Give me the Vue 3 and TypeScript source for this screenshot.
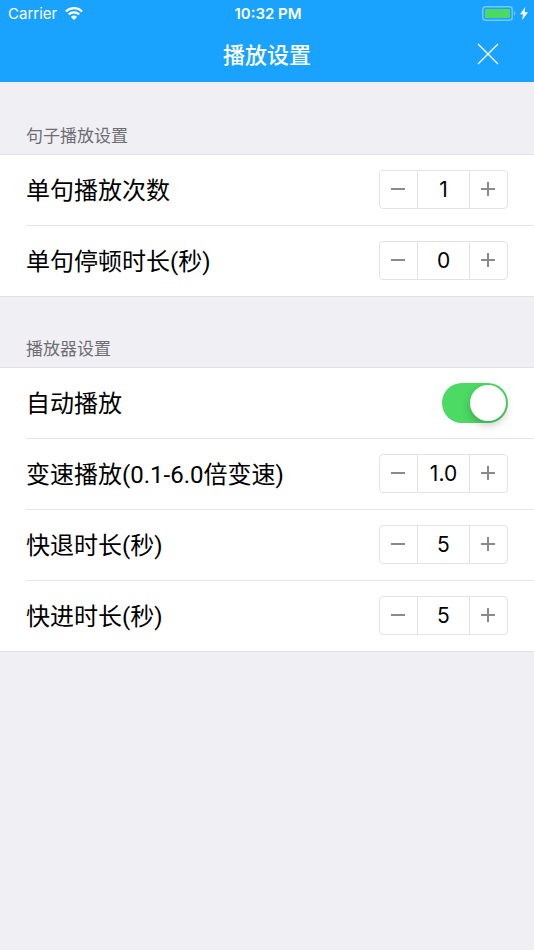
<script setup lang="ts">
import { reactive } from 'vue'

interface StepperRow {
  kind: 'stepper'
  id: string
  label: string
  value: number
  step: number
  min: number
  max: number
  digits: number
}

interface SwitchRow {
  kind: 'switch'
  id: string
  label: string
  on: boolean
}

interface Group {
  title: string
  rows: (StepperRow | SwitchRow)[]
}

const stepper = (id: string, label: string, value: number, step = 1, min = 0, max = 99, digits = 0): StepperRow => ({
  kind: 'stepper', id, label, value, step, min, max, digits,
})

const groups = reactive<Group[]>([
  {
    title: '句子播放设置',
    rows: [
      stepper('repeat', '单句播放次数', 1, 1, 1),
      stepper('pause', '单句停顿时长(秒)', 0),
    ],
  },
  {
    title: '播放器设置',
    rows: [
      { kind: 'switch', id: 'autoplay', label: '自动播放', on: true },
      stepper('speed', '变速播放(0.1-6.0倍变速)', 1, 0.1, 0.1, 6, 1),
      stepper('rewind', '快退时长(秒)', 5),
      stepper('forward', '快进时长(秒)', 5),
    ],
  },
])

function setValue(row: StepperRow, next: number) {
  if (Number.isNaN(next)) return
  row.value = Math.min(row.max, Math.max(row.min, Number(next.toFixed(row.digits))))
}

function onInput(row: StepperRow, event: Event) {
  setValue(row, parseFloat((event.target as HTMLInputElement).value))
}
</script>

<template>
  <div class="screen">
    <header class="top">
      <div class="status">
        <div class="carrier">
          <span>Carrier</span>
          <svg class="wifi" viewBox="0 0 18 13" aria-hidden="true">
            <path d="M.9 4.5a11.5 11.5 0 0 1 16.2 0" />
            <path d="M3.8 7.5a7.4 7.4 0 0 1 10.4 0" />
            <path class="solid" d="M9 13 5.9 9.9a4.4 4.4 0 0 1 6.2 0Z" />
          </svg>
        </div>
        <time class="clock">10:32 PM</time>
        <div class="power">
          <svg class="battery" viewBox="0 0 34 15" aria-hidden="true">
            <rect class="shell" x="0.75" y="0.75" width="29.5" height="13.5" rx="3" />
            <rect class="charge" x="3" y="3" width="25" height="9" rx="1" />
            <path class="cap" d="M32 5.2c1.8.5 1.8 4.1 0 4.6Z" />
          </svg>
          <svg class="bolt" viewBox="0 0 8 13" aria-hidden="true">
            <path d="M5.2 0 0 7.2h3L2.2 13 8 5.3H4.7Z" />
          </svg>
        </div>
      </div>
      <div class="nav">
        <h1>播放设置</h1>
        <button class="close" type="button" aria-label="关闭">
          <svg viewBox="0 0 22 22" aria-hidden="true"><path d="M1 1l20 20M21 1L1 21" /></svg>
        </button>
      </div>
    </header>

    <main>
      <section v-for="group in groups" :key="group.title">
        <h2>{{ group.title }}</h2>
        <div class="rows">
          <div v-for="row in group.rows" :key="row.id" class="row">
            <label :for="row.id">{{ row.label }}</label>
            <div v-if="row.kind === 'stepper'" class="stepper">
              <button type="button" :aria-label="row.label + ' −'" @click="setValue(row, row.value - row.step)">
                <svg viewBox="0 0 15 15" aria-hidden="true"><path d="M0 7h14" /></svg>
              </button>
              <input
                :id="row.id"
                type="text"
                inputmode="decimal"
                :value="row.value.toFixed(row.digits)"
                @change="onInput(row, $event)"
              />
              <button type="button" :aria-label="row.label + ' +'" @click="setValue(row, row.value + row.step)">
                <svg viewBox="0 0 15 15" aria-hidden="true"><path d="M0 7h14M7 0v14" /></svg>
              </button>
            </div>
            <input v-else :id="row.id" v-model="row.on" class="switch" type="checkbox" role="switch" />
          </div>
        </div>
      </section>
    </main>
  </div>
</template>

<style>
body {
  background: #efeff4;
}
</style>

<style scoped>
.screen {
  min-height: 100vh;
  background: #efeff4;
  color: #000;
  font-family: Roboto, "Noto Sans CJK SC", sans-serif;
}

button,
input {
  margin: 0;
  padding: 0;
  border: 0;
  background: none;
  color: inherit;
  font: inherit;
}

button {
  display: flex;
  align-items: center;
  justify-content: center;
  cursor: pointer;
}

svg {
  display: block;
  fill: none;
}

.top {
  background: #19a3ff;
  color: #fff;
}

.status {
  display: grid;
  grid-template-columns: 1fr auto 1fr;
  align-items: center;
  height: 26px;
  padding: 0 6px 0 8px;
  font-family: Inter, sans-serif;
  font-size: 15px;
}

.carrier,
.power {
  display: flex;
  align-items: center;
}

.carrier {
  gap: 8px;
}

.power {
  justify-content: flex-end;
  gap: 4px;
}

.wifi {
  width: 18px;
  height: 13px;
  stroke: #fff;
  stroke-width: 2.4;
}

.wifi .solid {
  fill: #fff;
  stroke: none;
}

.clock {
  font-weight: 600;
}

.battery {
  width: 34px;
  height: 15px;
}

.shell {
  stroke: #75c8ff;
  stroke-width: 1.5;
}

.charge {
  fill: #4cd964;
}

.cap {
  fill: #75c8ff;
}

.bolt {
  width: 8px;
  height: 13px;
  fill: #fff;
}

.nav {
  display: grid;
  grid-template-columns: 1fr auto 1fr;
  align-items: center;
  height: 56px;
  padding: 0 24px;
}

h1 {
  grid-column: 2;
  margin: 0;
  padding-top: 4px;
  font-size: 22px;
  font-weight: 500;
  line-height: 32px;
}

.close {
  justify-self: end;
  width: 44px;
  height: 44px;
}

.close svg {
  width: 22px;
  height: 22px;
  stroke: #fff;
  stroke-width: 1.3;
}

h2 {
  margin: 0;
  padding: 40px 26px 6px;
  color: #6d6d72;
  font-size: 17px;
  font-weight: 400;
  line-height: 24px;
}

section:first-child h2 {
  padding-top: 42px;
}

.rows {
  border-top: 1px solid #e2e2e5;
  border-bottom: 1px solid #e2e2e5;
  background: #fff;
}

.row {
  display: flex;
  align-items: center;
  justify-content: space-between;
  height: 70px;
  margin-left: 26px;
  padding-right: 26px;
}

.row + .row {
  border-top: 1px solid #e5e5e5;
}

label {
  padding-top: 2px;
  font-size: 24px;
  line-height: 36px;
}

.stepper {
  display: flex;
  height: 37px;
  margin-bottom: 2px;
  border: 1px solid #e3e3e3;
  border-radius: 4px;
}

.stepper button {
  width: 37px;
}

.stepper button svg {
  width: 15px;
  height: 15px;
  stroke: #8a8a8a;
  stroke-width: 2;
}

.stepper input {
  width: 51px;
  border-right: 1px solid #e3e3e3;
  border-left: 1px solid #e3e3e3;
  font-family: Inter, sans-serif;
  font-size: 21px;
  text-align: center;
}

.switch {
  display: flex;
  align-items: center;
  width: 66px;
  height: 40px;
  padding: 2px;
  box-sizing: border-box;
  border-radius: 20px;
  background: #e5e5e5;
  appearance: none;
  cursor: pointer;
}

.switch::before {
  content: "";
  width: 36px;
  height: 36px;
  border-radius: 50%;
  background: #fff;
  box-shadow: 0 4px 8px rgba(0, 0, 0, 0.22);
}

.switch:checked {
  justify-content: flex-end;
  background: #4cd964;
}
</style>
